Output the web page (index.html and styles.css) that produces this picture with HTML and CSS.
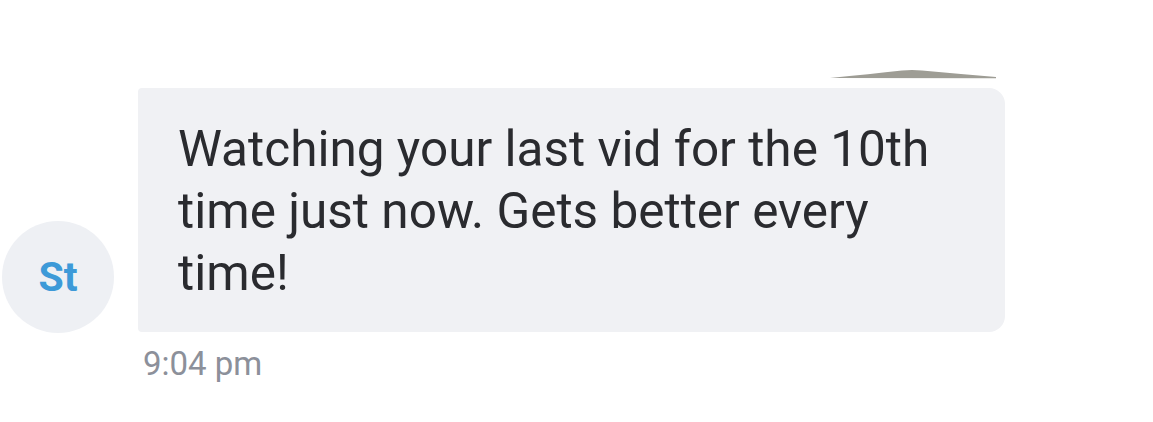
FILE: index.html
```html
<!DOCTYPE html>
<html>
<head>
<meta charset="utf-8">
<link rel="stylesheet" href="styles.css">
</head>
<body>
<div class="page">
  <svg class="artifact" width="170" height="12" viewBox="0 0 170 12"><path d="M0 10 Q40 6 72 2.5 Q82 1.5 92 2.5 Q130 6 166 9 L166 10.3 Z" fill="#9e9d95"/></svg>
  <div class="row">
    <div class="avatar">St</div>
    <div class="msg">
      <div class="bubble">Watching your last vid for the 10th time just now. Gets better every time!</div>
      <div class="time">9:04 pm</div>
    </div>
  </div>
</div>
</body>
</html>
```
FILE: styles.css
```css
html, body { margin: 0; padding: 0; background: #ffffff; }
body { font-family: Roboto, "Noto Sans", sans-serif; }
.page { position: relative; width: 1153px; height: 422px; overflow: hidden; }
.artifact { position: absolute; left: 830px; top: 68px; }
.row { display: flex; align-items: flex-start; padding: 88px 0 0 2px; }
.avatar {
  width: 112px; height: 112px; border-radius: 50%;
  background: #eef0f4; color: #3d9ad8;
  font-weight: 700; font-size: 41px;
  display: flex; align-items: center; justify-content: center;
  margin-top: 133px; flex-shrink: 0;
}
.msg { margin-left: 24px; display: flex; flex-direction: column; }
.bubble {
  width: 867px; box-sizing: border-box;
  background: #f0f1f4; color: #2a2b2f;
  font-size: 49.5px; line-height: 62px;
  padding: 30px 45px 28px 40px;
  border-radius: 4px 16px 16px 4px;
}
.time { color: #8c909a; font-size: 33px; margin-top: 12px; padding-left: 5px; }
```
